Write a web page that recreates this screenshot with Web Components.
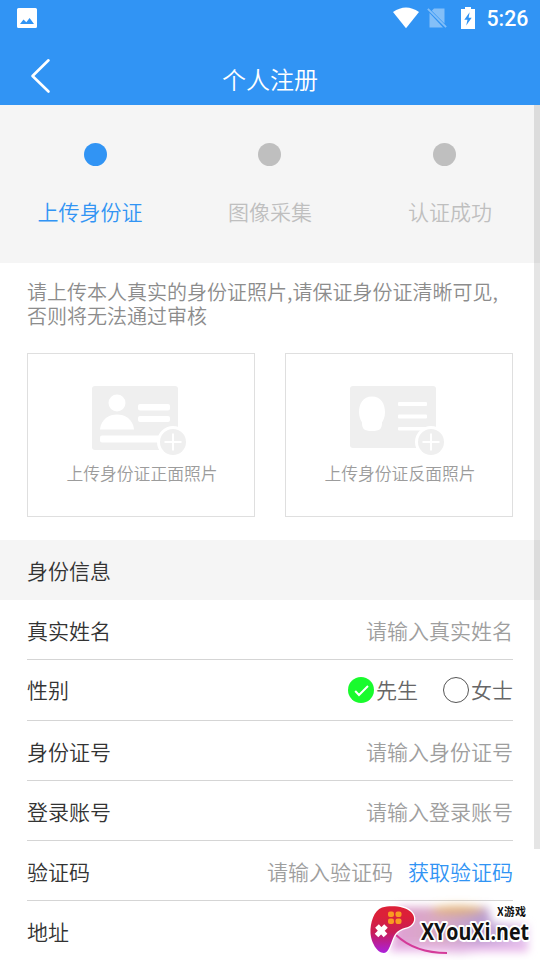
<!DOCTYPE html>
<html lang="zh-CN">
<head>
<meta charset="utf-8">
<title>个人注册</title>
<style>
html,body{margin:0;height:960px;overflow:hidden;background:#fff}
body{font-family:"Noto Sans CJK SC","Noto Sans",sans-serif;font-size:21px;font-weight:350}
</style>
</head>
<body>
<register-page></register-page>
<script>
function define(name, html) {
  const t = document.createElement('template');
  t.innerHTML = html;
  customElements.define(name, class extends HTMLElement {
    constructor() {
      super();
      this.attachShadow({mode: 'open'}).append(t.content.cloneNode(true));
    }
  });
}

define('status-bar', `
<style>
:host{display:flex;height:37px;box-sizing:border-box;padding:0 12px 1px 17px;align-items:center;color:#fff}
svg{display:block;flex:none}
.gap{flex:1}
time{font:500 21.3px/37px Roboto,sans-serif;width:41.500px;margin:1px 0 0 11.500px;white-space:nowrap}
</style>
<svg width="20" height="20" viewBox="0 0 20 20"><path fill="#fff" fill-rule="evenodd" d="M1.500 0H18.500Q20 0 20 1.500V18.500Q20 20 18.500 20H1.500Q0 20 0 18.500V1.500Q0 0 1.500 0ZM3 16H17L12.600 10L9.300 14.200L6.500 11.500Z"/></svg>
<span class="gap"></span>
<svg width="26" height="22" viewBox="0 0 26 22"><path fill="#fff" d="M0 5Q13-4 26 5L13 21.300Z"/></svg>
<svg width="20" height="20" viewBox="0 0 20 20" style="margin-left:8px"><path fill="#fff" opacity=".4" d="M7 .5H17.500V15.500L4.800 2.700ZM2.500 5L16 19.500H2.500ZM.2 1.500L1.500.2L19.800 18.500L18.500 19.800Z"/></svg>
<svg width="14" height="22" viewBox="0 0 14 22" style="margin-left:14px"><path fill="#fff" fill-rule="evenodd" d="M4 0H10V2H14V22H0V2H4ZM8.600 5.200L3.300 12.700H6.500L5.200 18.500L10.700 10.700H7.600Z"/></svg>
<time>5:26</time>`);

define('nav-bar', `
<style>
:host{display:grid;grid-template-columns:70px 1fr 70px;height:68px;align-items:center;color:#fff}
svg{display:block;margin-left:30px;margin-top:10px}
h1{margin:16px 0 0;font-size:24px;line-height:36px;font-weight:inherit;text-align:center}
</style>
<svg width="21" height="36" viewBox="0 0 21 36"><path d="M18.500 2.300L2.500 18L18.500 33.500" fill="none" stroke="#fff" stroke-width="2.600" stroke-linecap="round" stroke-linejoin="round"/></svg>
<h1><slot></slot></h1>`);

define('step-progress', `
<style>
:host{display:block;height:158px;background:#f5f5f5;box-sizing:border-box;padding-top:38px;color:#bfbfbf}
.dots{display:flex;justify-content:space-between;padding:0 84px}
i{width:23px;height:23px;border-radius:50%;background:#bfbfbf}
i:first-child{background:#3194f4}
i:nth-child(2){margin-right:1px}
.labels{display:grid;grid-template-columns:repeat(3,1fr);text-align:center;line-height:30px;margin-top:30px}
::slotted(.active){color:#3194f4}
</style>
<div class="dots"><i></i><i></i><i></i></div>
<div class="labels"><slot></slot></div>`);

define('upload-card', `
<style>
:host{display:flex;flex-direction:column;align-items:center;box-sizing:border-box;width:228px;height:164px;border:1px solid #dfdfdf;padding:32px 0 0 0;font-size:16.800px;line-height:24px;color:#9c9c9c}
.icon{height:70px;padding-right:2px}
.label{margin-top:5px;padding-left:2px}
</style>
<div class="icon"><slot name="icon"></slot></div>
<div class="label"><slot></slot></div>`);

const badge = `<circle cx="81" cy="56" r="16" fill="#fff"/><circle cx="81" cy="56" r="13" fill="#efefef"/><path d="M72.500 56H89.500M81 47.500V64.500" stroke="#fff" stroke-width="2"/>`;
define('id-front-icon', `
<style>:host{display:block;width:96px;height:70px}svg{display:block}</style>
<svg width="96" height="70" viewBox="0 0 96 70"><rect width="86" height="64" rx="3" fill="#efefef"/>
<g fill="#fff"><circle cx="25" cy="17" r="8.500"/><path d="M8 43.500C9 33 17 28.500 25 28.500S41 33 42 43.500Z"/><rect x="46" y="18" width="32" height="6.500" rx="2"/><rect x="46" y="30" width="32" height="6" rx="2"/><rect x="8" y="49.500" width="60" height="7" rx="2"/></g>${badge}</svg>`);
define('id-back-icon', `
<style>:host{display:block;width:96px;height:70px}svg{display:block}</style>
<svg width="96" height="70" viewBox="0 0 96 70"><rect width="86" height="62" rx="3" fill="#efefef"/>
<g fill="#fff"><path d="M22 10.500C31 10.500 35 18 35 26C35 31 33.500 34 32 36.500C32 43 30 45 22 45S12 43 12 36.500C10 33 9 30 9 26C9 18 13 10.500 22 10.500Z"/><rect x="48" y="16" width="29" height="4" rx="1"/><rect x="48" y="28.500" width="29" height="4" rx="1"/><rect x="48" y="41" width="29" height="3.500" rx="1"/></g>${badge}</svg>`);

define('section-title', `
<style>:host{display:block;box-sizing:border-box;height:60px;background:#f5f5f5;padding-left:27px;line-height:60px;color:#333}</style><slot></slot>`);

define('form-row', `
<style>
:host{display:flex;align-items:center;justify-content:space-between;box-sizing:border-box;height:var(--row-height,60px);margin:0 27px;border-bottom:1px solid #d5d5d5;color:#333;padding-bottom:var(--row-pad,0)}
.value{display:flex;align-items:center;color:#9e9e9e}
::slotted(.link){margin-left:15px;color:#3194f4}
</style>
<span><slot name="label"></slot></span><div class="value"><slot></slot></div>`);

define('radio-option', `
<style>
:host{display:flex;align-items:center;color:#666;margin-left:25px}
svg{display:block;margin:2px 2px 0 0}
.on{display:none}
:host([checked]) .on{display:inline}
:host([checked]) .off{display:none}
</style>
<svg width="26" height="26" viewBox="0 0 26 26"><circle class="off" cx="13" cy="13" r="12.500" fill="#fff" stroke="#555" stroke-width="1"/><g class="on"><circle cx="13" cy="13" r="13" fill="#19fb2d"/><path d="M7.200 14L11 18L20 9" fill="none" stroke="#fff" stroke-width="2"/></g></svg><slot></slot>`);

define('scroll-thumb', `<style>:host{position:absolute;right:0;top:105px;width:6px;height:744px;background:rgba(0,0,0,.1)}</style>`);

define('site-mark', `
<style>
:host{position:absolute;left:360px;top:895px;width:180px;height:65px}
svg{display:block;overflow:visible}
text{font-family:"Noto Sans CJK SC",sans-serif;font-weight:700;fill:#111;stroke:#fff;paint-order:stroke;stroke-linejoin:round}
</style>
<svg width="180" height="65" viewBox="0 0 180 65">
<defs>
<filter id="soft" x="-20%" y="-50%" width="140%" height="200%"><feGaussianBlur stdDeviation="4"/></filter>
<linearGradient id="pad" x1="0" y1="0" x2="0" y2="1"><stop offset=".2" stop-color="#dc2038"/><stop offset=".55" stop-color="#c91d55"/><stop offset="1" stop-color="#ab20dc"/></linearGradient>
<linearGradient id="glow"><stop offset="0" stop-color="#d47bc8"/><stop offset=".35" stop-color="#c98aa8"/><stop offset=".65" stop-color="#9f78bd"/><stop offset="1" stop-color="#dfb5eb"/></linearGradient>
</defs>
<g filter="url(#soft)"><path d="M38 12H128L132 28L168 30V52L100 58L32 55Z" fill="url(#glow)" opacity=".72"/><ellipse cx="98" cy="15" rx="26" ry="5" fill="#e8b45c" opacity=".65"/><path d="M30 53H168" stroke="#e8b5e9" stroke-width="7"/></g>
<path d="M36 40Q55 58 87 58" fill="none" stroke="#d43a99" stroke-width="2"/>
<path d="M22 12.500C31 10 45 11 51 17C56 22 55 29 48 32C40 34 37 36 34 41C31 47 29 58 24 58C17 58 11 47 10.500 38C10 28 14 15 22 12.500Z" fill="url(#pad)" stroke="#fff" stroke-width="2.500" paint-order="stroke"/>
<g fill="#f99b22"><rect x="28" y="16.500" width="6" height="5.500" rx="2"/><rect x="35.500" y="16.500" width="6" height="5.500" rx="2"/><rect x="28" y="23.500" width="6" height="5.500" rx="2"/><rect x="35.500" y="23.500" width="6" height="5.500" rx="2"/></g>
<path d="M17 31L25.500 40.500M26 31L16.500 40.500" stroke="#fff" stroke-width="5"/>
<text x="137" y="21" font-size="11" stroke-width="3" textLength="29">X游戏</text>
<text x="61" y="45" font-size="24" stroke-width="4" textLength="108" lengthAdjust="spacingAndGlyphs" style="font-family:'Open Sans','Noto Sans',sans-serif">XYouXi.net</text>
</svg>`);

define('register-page', `
<style>
:host{display:block;position:relative;width:540px;height:960px;overflow:hidden;background:#fff}
header{background:#3194f4;height:105px}
.notice{margin:0;padding:17px 27px 0;height:73px;box-sizing:content-box;font-size:20px;line-height:24px;color:#8c8c8c}
.cards{display:flex;justify-content:space-between;padding:0 27px 23px}
.r61{--row-height:61px;--row-pad:2px}
.last{border:0}
</style>
<header><status-bar></status-bar><nav-bar>个人注册</nav-bar></header>
<step-progress><span class="active">上传身份证</span><span>图像采集</span><span>认证成功</span></step-progress>
<p class="notice">请上传本人真实的身份证照片,请保证身份证清晰可见,<br>否则将无法通过审核</p>
<div class="cards">
<upload-card><id-front-icon slot="icon"></id-front-icon>上传身份证正面照片</upload-card>
<upload-card><id-back-icon slot="icon"></id-back-icon>上传身份证反面照片</upload-card>
</div>
<section-title>身份信息</section-title>
<form-row><span slot="label">真实姓名</span>请输入真实姓名</form-row>
<form-row class="r61"><span slot="label">性别</span><radio-option checked>先生</radio-option><radio-option>女士</radio-option></form-row>
<form-row><span slot="label">身份证号</span>请输入身份证号</form-row>
<form-row><span slot="label">登录账号</span>请输入登录账号</form-row>
<form-row><span slot="label">验证码</span><span>请输入验证码</span><span class="link">获取验证码</span></form-row>
<form-row class="last"><span slot="label">地址</span></form-row>
<scroll-thumb></scroll-thumb>
<site-mark></site-mark>`);
</script>
</body>
</html>
